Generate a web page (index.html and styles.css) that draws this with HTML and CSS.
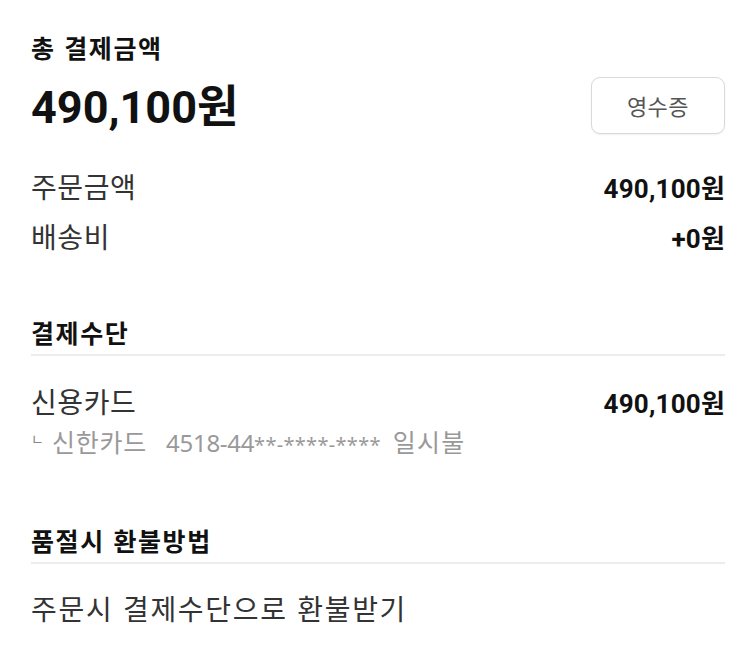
FILE: index.html
```html
<!DOCTYPE html>
<html lang="ko">
<head>
<meta charset="utf-8">
<link rel="stylesheet" href="styles.css">
</head>
<body>
<main class="page">
  <h2 class="title">총 결제금액</h2>
  <div class="total-row">
    <div class="total-amount">490,100원</div>
    <button class="receipt-btn">영수증</button>
  </div>
  <div class="rows">
    <div class="row">
      <span class="label">주문금액</span>
      <span class="value">490,100원</span>
    </div>
    <div class="row">
      <span class="label">배송비</span>
      <span class="value">+0원</span>
    </div>
  </div>

  <h2 class="section-title">결제수단</h2>
  <div class="row pay-row">
    <span class="label">신용카드</span>
    <span class="value">490,100원</span>
  </div>
  <div class="sub"><span class="sub-mark">ㄴ</span><span class="card-name">신한카드</span><span class="card-no">4518-44<span class="mask">**-****-****</span></span><span class="card-plan">일시불</span></div>

  <h2 class="section-title refund">품절시 환불방법</h2>
  <div class="refund-text">주문시 결제수단으로 환불받기</div>
</main>
</body>
</html>
```
FILE: styles.css
```css
html, body {
  margin: 0;
  padding: 0;
  background: #fff;
}
body {
  font-family: "Noto Sans CJK KR", "Noto Sans", sans-serif;
  color: #222;
}
.page {
  padding: 30px 25px 0 31px;
}
.title {
  margin: 0;
  font-size: 25px;
  font-weight: 700;
  letter-spacing: 1.6px;
  line-height: 34px;
  color: #111;
}
.total-row {
  margin-top: 12px;
  height: 58px;
  display: flex;
  justify-content: space-between;
  align-items: center;
}
.total-amount {
  font-family: Roboto, "Noto Sans CJK KR", sans-serif;
  font-size: 45px;
  font-weight: 700;
  color: #111;
  line-height: 58px;
  padding-top: 6px;
}
.receipt-btn {
  width: 134px;
  height: 57px;
  border: 1px solid #d9d9d9;
  border-radius: 9px;
  background: #fff;
  font-family: "Noto Sans CJK KR", sans-serif;
  font-size: 22px;
  letter-spacing: 0.5px;
  color: #555;
  box-shadow: 0 1px 2px rgba(0,0,0,0.06);
  padding: 0;
}
.rows {
  margin-top: 27px;
}
.row {
  display: flex;
  justify-content: space-between;
  align-items: center;
  height: 50px;
}
.label {
  font-size: 28px;
  letter-spacing: 0.6px;
  color: #333;
}
.value {
  font-family: Roboto, "Noto Sans CJK KR", sans-serif;
  font-size: 26px;
  font-weight: 700;
  color: #111;
  letter-spacing: 0.2px;
}
.section-title {
  margin: 54px 0 0;
  font-size: 25px;
  font-weight: 700;
  letter-spacing: 1.6px;
  line-height: 34px;
  color: #111;
  padding-bottom: 5px;
  border-bottom: 2px solid #ececec;
}
.section-title.refund {
  margin-top: 57px;
}
.pay-row {
  margin-top: 25px;
  height: 40px;
}
.sub {
  font-size: 25px;
  line-height: 40px;
  color: #999;
  display: flex;
  align-items: baseline;
  white-space: pre;
}
.sub-mark {
  font-size: 14px;
  position: relative;
  top: -8px;
  margin-right: 8px;
  color: #888;
}
.card-name {
  letter-spacing: 0.8px;
  margin-right: 19px;
}
.card-no {
  font-family: "Noto Sans", sans-serif;
  font-size: 24px;
  letter-spacing: -0.3px;
  margin-right: 12px;
}
.mask {
  font-size: 20px;
  letter-spacing: 0.3px;
}
.card-plan {
  letter-spacing: 1.2px;
}
.refund-text {
  margin-top: 24px;
  font-size: 28px;
  letter-spacing: 1.7px;
  line-height: 40px;
  color: #333;
}
```
